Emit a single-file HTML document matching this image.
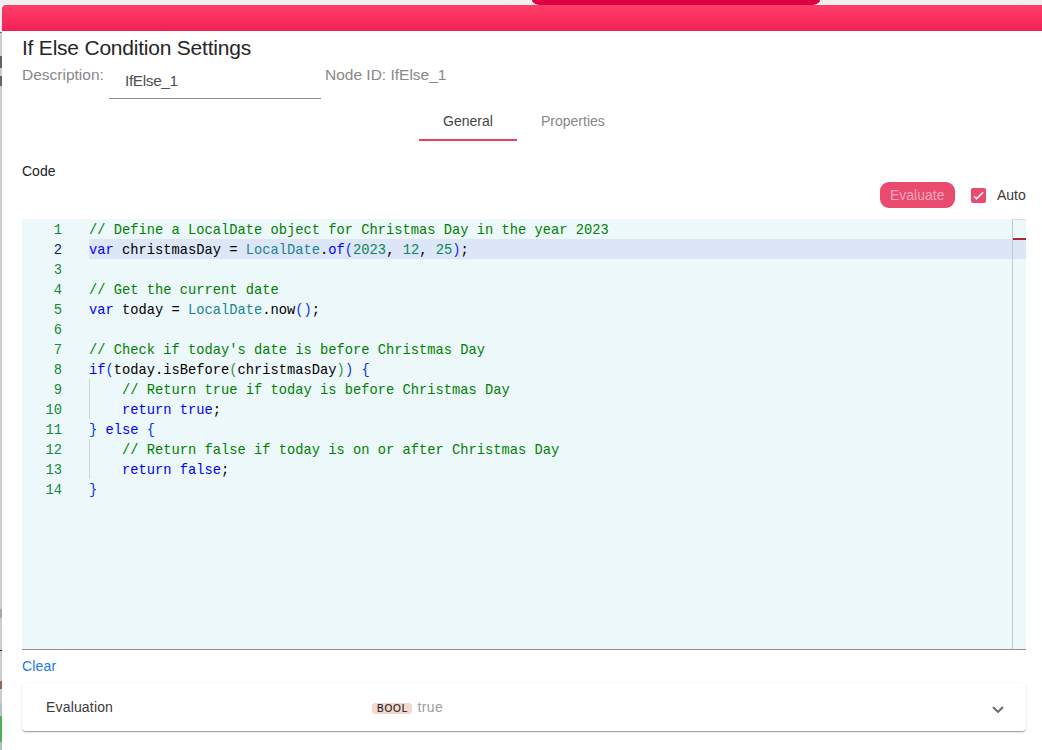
<!DOCTYPE html>
<html><head><meta charset="utf-8">
<style>
*{box-sizing:border-box;margin:0;padding:0}
html,body{width:1042px;height:750px;overflow:hidden;background:#efefef;font-family:"Liberation Sans",sans-serif}
.abs{position:absolute}
#dlg{position:absolute;left:2px;top:5px;width:1040px;height:745px;background:#fff;border-top-left-radius:4px;overflow:hidden}
#hdr{position:absolute;left:0;top:0;width:100%;height:25.6px;background:linear-gradient(#fe3e67,#f42459 90%,#ee1a53)}
.t{position:absolute;white-space:pre;line-height:1}
#ed{position:absolute;left:22px;top:219px;width:1004px;height:430px;background:#edf8fa;overflow:hidden}
#edb{position:absolute;left:22px;top:649px;width:1004px;height:1px;background:#8e8e8e}
.ln{position:absolute;left:0;width:40px;text-align:right;height:20px;line-height:20px;color:#128a3a}
.cl{position:absolute;left:67px;height:20px;line-height:20px;white-space:pre;color:#000}
#code{position:absolute;left:0;top:2px;width:100%;height:100%;font-family:"Liberation Mono",monospace;font-size:13.75px}
.c{color:#008000}.k{color:#0000ff}.ty{color:#1b8491}.n{color:#098658}.b1{color:#0431fa}.b2{color:#319331}
.act{color:#0b216f}
</style></head><body>
<div class="abs" style="left:531.5px;top:-0.5px;width:288px;height:6px;background:#dc0043;border-radius:0 0 14px 14px / 0 0 6px 6px"></div>
<div class="abs" style="left:0;top:32px;width:2px;height:718px;background:#cdcdcd"></div>
<div class="abs" style="left:0;top:32px;width:2px;height:1px;background:#6f6f6f"></div>
<div class="abs" style="left:0;top:56px;width:2px;height:12px;background:#5f6468"></div>
<div class="abs" style="left:0;top:76px;width:2px;height:10px;background:#5f6468"></div>
<div class="abs" style="left:0;top:609px;width:2px;height:9px;background:#a8a8a8"></div>
<div class="abs" style="left:0;top:650px;width:2px;height:1px;background:#222"></div>
<div class="abs" style="left:0;top:703px;width:2px;height:12px;background:#b0c4c4"></div>
<div class="abs" style="left:0;top:716px;width:2px;height:26px;background:#4caf50"></div><div class="abs" style="left:0;top:742px;width:2px;height:8px;background:#a8c0c0"></div><div class="abs" style="left:0;top:681px;width:2px;height:8px;background:#a0625c"></div>
<div id="dlg">
  <div id="hdr"></div>
</div>
<div class="t" style="left:22px;top:36.5px;font-size:21px;letter-spacing:-0.22px;color:#262626">If Else Condition Settings</div>
<div class="t" style="left:22px;top:66.5px;font-size:15.5px;color:#888">Description:</div>
<div class="t" style="left:125px;top:72.5px;font-size:15.5px;letter-spacing:-0.4px;color:#505050">IfElse_1</div>
<div class="abs" style="left:109px;top:98px;width:212px;height:1px;background:#8a8a8a"></div>
<div class="t" style="left:325px;top:66.5px;font-size:15.5px;color:#888">Node ID: IfElse_1</div>
<div class="t" style="left:443px;top:114px;font-size:14px;color:#444">General</div>
<div class="t" style="left:541px;top:114px;font-size:14px;color:#888">Properties</div>
<div class="abs" style="left:419px;top:139px;width:98px;height:2px;background:#e83e65"></div>
<div class="t" style="left:22px;top:164px;font-size:14px;color:#222">Code</div>

<div class="abs" style="left:880px;top:182px;width:75px;height:26px;background:#ea4a6d;border-radius:9px"></div>
<div class="t" style="left:890px;top:188px;font-size:14px;color:#f7a8ba">Evaluate</div>
<div class="abs" style="left:971px;top:188px;width:15px;height:15px;background:#ea4a6d;border-radius:2px"></div>
<svg class="abs" style="left:971px;top:188px" width="15" height="15" viewBox="0 0 15 15"><path d="M3 8.2 L5.5 10.6 L12.2 4.3" fill="none" stroke="#fff" stroke-width="1.5"/></svg>
<div class="t" style="left:997px;top:187.5px;font-size:14px;color:#3a3a3a">Auto</div>

<div id="ed">
 <div class="abs" style="left:67px;top:20px;width:937px;height:20px;background:#dce6f7"></div>
 <div class="abs" style="left:990px;top:0;width:1px;height:430px;background:#c2c8cc"></div><div class="abs" style="left:991px;top:0;width:13px;height:1px;background:#d6dede"></div>
 <div class="abs" style="left:991px;top:19px;width:13px;height:2px;background:#a52a30"></div>
 <div class="abs" style="left:67px;top:160px;width:1px;height:40px;background:#d3d3d3"></div>
 <div class="abs" style="left:67px;top:220px;width:1px;height:40px;background:#d3d3d3"></div>
 <div id="code">
  <div class="ln" style="top:0">1</div><div class="cl" style="top:0"><span class="c">// Define a LocalDate object for Christmas Day in the year 2023</span></div>
  <div class="ln act" style="top:20px">2</div><div class="cl" style="top:20px"><span class="k">var</span> christmasDay = <span class="ty">LocalDate</span>.<span class="k">of</span><span class="b1">(</span><span class="n">2023</span>, <span class="n">12</span>, <span class="n">25</span><span class="b1">)</span>;</div>
  <div class="ln" style="top:40px">3</div>
  <div class="ln" style="top:60px">4</div><div class="cl" style="top:60px"><span class="c">// Get the current date</span></div>
  <div class="ln" style="top:80px">5</div><div class="cl" style="top:80px"><span class="k">var</span> today = <span class="ty">LocalDate</span>.now<span class="b1">()</span>;</div>
  <div class="ln" style="top:100px">6</div>
  <div class="ln" style="top:120px">7</div><div class="cl" style="top:120px"><span class="c">// Check if today's date is before Christmas Day</span></div>
  <div class="ln" style="top:140px">8</div><div class="cl" style="top:140px"><span class="k">if</span><span class="b1">(</span>today.isBefore<span class="b2">(</span>christmasDay<span class="b2">)</span><span class="b1">)</span> <span class="b1">{</span></div>
  <div class="ln" style="top:160px">9</div><div class="cl" style="top:160px">    <span class="c">// Return true if today is before Christmas Day</span></div>
  <div class="ln" style="top:180px">10</div><div class="cl" style="top:180px">    <span class="k">return</span> <span class="k">true</span>;</div>
  <div class="ln" style="top:200px">11</div><div class="cl" style="top:200px"><span class="b1">}</span> <span class="k">else</span> <span class="b1">{</span></div>
  <div class="ln" style="top:220px">12</div><div class="cl" style="top:220px">    <span class="c">// Return false if today is on or after Christmas Day</span></div>
  <div class="ln" style="top:240px">13</div><div class="cl" style="top:240px">    <span class="k">return</span> <span class="k">false</span>;</div>
  <div class="ln" style="top:260px">14</div><div class="cl" style="top:260px"><span class="b1">}</span></div>
 </div>
</div>
<div id="edb"></div>

<div class="t" style="left:22px;top:659px;font-size:14px;letter-spacing:.15px;color:#2176f5">Clear</div>
<div class="abs" style="left:22px;top:683px;width:1004px;height:48px;background:#fff;border-radius:4px;box-shadow:0 2px 1px -1px rgba(0,0,0,.2),0 1px 1px 0 rgba(0,0,0,.14),0 1px 3px 0 rgba(0,0,0,.12)"></div>
<div class="t" style="left:46px;top:700px;font-size:14px;letter-spacing:.17px;color:#3a3a3a">Evaluation</div>
<div class="abs" style="left:372px;top:703px;width:40px;height:11px;background:#f5d8cd;border-radius:3px"></div>
<div class="t" style="left:377px;top:704px;font-size:10px;color:#1a1a1a;letter-spacing:.8px;-webkit-text-stroke:.15px #1a1a1a">BOOL</div>
<div class="t" style="left:417.5px;top:700px;font-size:14px;letter-spacing:.4px;color:#a0a0a0">true</div>
<svg class="abs" style="left:990px;top:704.3px" width="16" height="12" viewBox="0 0 16 12"><path d="M3 3 L8 8 L13 3" fill="none" stroke="#666" stroke-width="1.85"/></svg>
</body></html>
